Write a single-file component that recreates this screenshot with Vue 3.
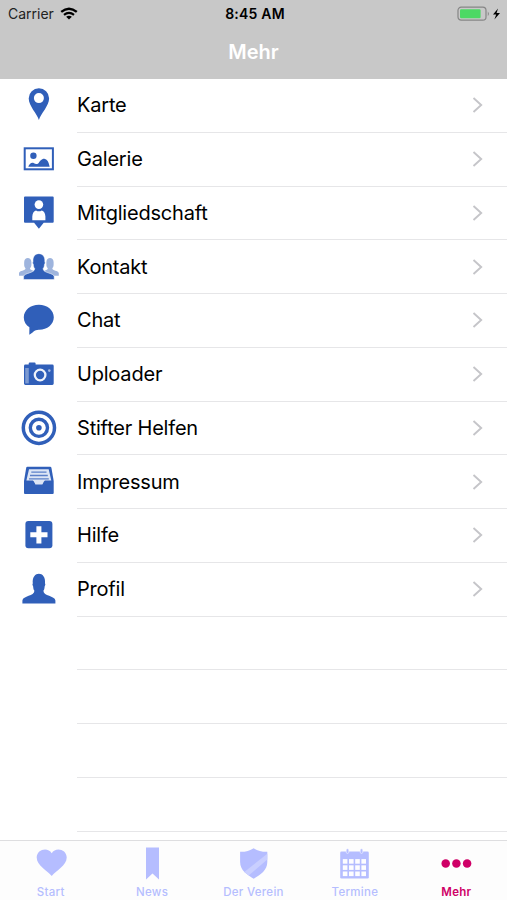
<template>
  <div class="screen">
    <header class="header">
      <div class="status-bar">
        <div class="carrier">
          <span>Carrier</span>
          <svg class="wifi" viewBox="0 0 18 13" fill="none" stroke="#000">
            <path d="M1.2 4.9Q9 -1.5 16.8 4.9" stroke-width="2.4" />
            <path d="M4 7.9Q9 3.9 14 7.9" stroke-width="2.2" />
            <path d="M9 12.4L6.1 9.8Q9 7.8 11.9 9.8Z" fill="#000" stroke="none" />
          </svg>
        </div>
        <span class="time">8:45 AM</span>
        <svg class="battery" viewBox="0 0 45 16">
          <rect x="1" y="1.2" width="28" height="13" rx="3.2" fill="none" stroke="#858585" stroke-width="1.2" />
          <rect x="3" y="3.2" width="20.6" height="9" rx="1.2" fill="#4cd964" />
          <path d="M30.8 5.4Q33 7.7 30.8 10Z" fill="#858585" />
          <path d="M41 2.4L36 8.6H39.2L37.4 13.6L43 6.9H39.6Z" fill="#000" />
        </svg>
      </div>
      <h1 class="title">Mehr</h1>
    </header>

    <main class="list">
      <div v-for="item in items" :key="item.icon" class="row">
        <svg class="icon" viewBox="0 0 77 54" fill="#305fb9">
          <path
            v-if="item.icon === 'pin'"
            fill-rule="evenodd"
            d="M38.9 41C37 34.5 28.7 27 28.7 19.2A10.2 10 0 0 1 49.1 19.2C49.1 27 40.8 34.5 38.9 41ZM38.9 14.1A5 5 0 1 0 38.9 24.1A5 5 0 1 0 38.9 14.1Z"
          />
          <template v-else-if="item.icon === 'picture'">
            <rect x="24.7" y="15.3" width="28.2" height="21" fill="#fff" stroke="#305fb9" stroke-width="2" />
            <circle cx="33.4" cy="22.7" r="3.2" />
            <path d="M28.3 33.7C29 30.8 31.8 28.8 34 30.2Q36 31.7 38.2 30.4C40 28.3 41.4 25.6 44.4 25.7Q48.3 26.2 49.7 33.7Z" />
          </template>
          <template v-else-if="item.icon === 'member'">
            <path d="M25 9.6H52.7Q53.7 9.6 53.7 10.6V34.8Q53.7 35.8 52.7 35.8H43.7L38.9 41.8L34.1 35.8H25Q24 35.8 24 34.8V10.6Q24 9.6 25 9.6Z" />
            <circle cx="38.9" cy="17.6" r="4.3" fill="#fff" />
            <path d="M32.3 33.2V29.4Q32.6 24.5 36 23.4Q38.9 25.2 41.8 23.4Q45.1 24.5 45.4 29.4V33.2Z" fill="#fff" />
          </template>
          <template v-else-if="item.icon === 'group'">
            <g fill="#9eb4dd">
              <path d="M19 35.7V33C19.5 30.6 25.5 31 25.5 28.3C23.8 26.5 24.2 24.7 24.2 22C24.2 16.7 31.4 16.7 31.4 22C31.4 24.7 31.8 26.5 30 28.3C30 31 36.5 30.6 37 33V35.7Z" />
              <path d="M58.8 35.7V33C58.3 30.6 52.3 31 52.3 28.3C54 26.5 53.6 24.7 53.6 22C53.6 16.7 46.4 16.7 46.4 22C46.4 24.7 46 26.5 47.8 28.3C47.8 31 41.3 30.6 40.8 33V35.7Z" />
            </g>
            <path
              stroke="#fff"
              stroke-width="0.5"
              d="M23.6 39.6V36.6C24 32.6 34.8 33.5 34.7 28.6C33.4 27.2 33.6 25.9 33.3 24.3Q32.1 23.2 33 21.5C32 11 45.8 11 44.8 21.5Q45.7 23.2 44.5 24.3C44.2 25.9 44.4 27.2 43.1 28.6C43 33.5 53.8 32.6 54.2 36.6V39.6Z"
            />
          </template>
          <path
            v-else-if="item.icon === 'chat'"
            d="M38.9 10.7C47.2 10.7 53.8 16 53.8 23.3C53.8 30.7 46.8 36 38.6 35.7C34.5 35.7 32.5 38.9 29.3 40.7L29.4 33.3C26 31 23.8 27.8 23.8 23.5C23.8 16 30.6 10.7 38.9 10.7Z"
          />
          <template v-else-if="item.icon === 'camera'">
            <path d="M28.7 16.5V15.6Q28.7 14.6 29.7 14.6H34.6Q35.6 14.6 35.6 15.6V16.5H52.3Q53.7 16.5 53.7 17.9V35.6Q53.7 37 52.3 37H25.4Q24 37 24 35.6V17.9Q24 16.5 25.4 16.5Z" />
            <path d="M25.2 20H28.8V35.4H25.2Z" fill="#7c9ad1" />
            <circle cx="40.1" cy="27" r="5.3" fill="none" stroke="#eef2fa" stroke-width="2.3" />
            <circle cx="49.3" cy="22.6" r="1.3" fill="#a3b8df" />
          </template>
          <template v-else-if="item.icon === 'target'">
            <circle cx="38.9" cy="25.8" r="15.6" fill="none" stroke="#305fb9" stroke-width="3.5" />
            <circle cx="38.9" cy="25.8" r="8.6" fill="none" stroke="#305fb9" stroke-width="3.4" />
            <circle cx="38.9" cy="25.8" r="2.8" />
          </template>
          <template v-else-if="item.icon === 'tray'">
            <path d="M27.4 11.8H50.2Q51.2 11.8 51.4 12.8L53.7 26V38Q53.7 39 52.7 39H25Q24 39 24 38V26L26.2 12.8Q26.4 11.8 27.4 11.8Z" />
            <path d="M29 14.2H48.7L51.3 25.5H44.8L42.7 30H35.1L33 25.5H26.4Z" fill="#dce5f5" />
            <path d="M31.3 17.1H46.5M30 20.5H47.8M29 23.8H48.8" fill="none" stroke="#5b80c9" stroke-width="1.3" />
            <path d="M26 26.2H33.7L35.4 29.5H42.4L44.1 26.2H51.8V30H26Z" />
          </template>
          <template v-else-if="item.icon === 'plus'">
            <rect x="25.4" y="12.1" width="27" height="27.2" rx="3" />
            <path d="M38.9 17.2V34.4M30.3 25.8H47.5" fill="none" stroke="#fff" stroke-width="5" />
          </template>
          <path
            v-else
            d="M22.4 40.6V37.4C23 32.4 34.5 33.4 34.4 27.7C33.2 26.4 33.4 24.8 33.1 23.2Q31.9 22 32.8 20.3C31.3 7.4 46.5 7.4 45 20.3Q45.9 22 44.7 23.2C44.4 24.8 44.6 26.4 43.4 27.7C43.3 33.4 54.8 32.4 55.4 37.4V40.6Z"
          />
        </svg>
        <div class="cell">
          <span class="label">{{ item.label }}</span>
          <svg class="chevron" viewBox="0 0 12 18">
            <path d="M1.5 2L9.2 9L1.5 16" fill="none" stroke="#c5c5c9" stroke-width="1.9" />
          </svg>
        </div>
      </div>
      <div v-for="n in 4" :key="n" class="row empty">
        <div class="cell"></div>
      </div>
    </main>

    <nav class="tabs">
      <div v-for="tab in tabs" :key="tab.icon" class="tab" :class="{ active: tab.active }">
        <svg class="tab-icon" viewBox="0 0 101.4 41" fill="currentColor">
          <path
            v-if="tab.icon === 'heart'"
            d="M51.7 35C47.5 29.8 36.7 24.8 36.7 16.6C36.7 8.4 47.8 5.7 51.7 12.3C55.6 5.7 66.7 8.4 66.7 16.6C66.7 24.8 55.9 29.8 51.7 35Z"
          />
          <path v-else-if="tab.icon === 'bookmark'" d="M45 6.4H58V38.6L51.5 32.6L45 38.6Z" />
          <template v-else-if="tab.icon === 'shield'">
            <path d="M50.7 7.2Q56.5 11 64.3 10.8V21C64.3 29.4 57.3 33.7 50.7 37.7C44.1 33.7 37.1 29.4 37.1 21V10.8Q44.9 11 50.7 7.2Z" />
            <path d="M64.3 12.8V18.4L45.7 34.5L41.3 30.9Z" fill="#c9cfff" />
          </template>
          <template v-else-if="tab.icon === 'calendar'">
            <path d="M37.5 10.6H63.5Q64.8 10.6 64.8 11.9V36.3Q64.8 37.6 63.5 37.6H37.5Q36.2 37.6 36.2 36.3V11.9Q36.2 10.6 37.5 10.6Z" />
            <rect x="42.2" y="7.8" width="2.6" height="4.6" rx="1.2" stroke="#fff" stroke-width="0.5" />
            <rect x="56.2" y="7.8" width="2.6" height="4.6" rx="1.2" stroke="#fff" stroke-width="0.5" />
            <template v-for="r in 3" :key="r">
              <rect v-for="c in 4" :key="c" :x="32.6 + c * 6.2" :y="11.9 + r * 6.2" width="4.6" height="4.6" fill="#fdfdff" />
            </template>
          </template>
          <template v-else>
            <circle v-for="c in 3" :key="c" :cx="29 + c * 10.7" cy="22.4" r="4.25" />
          </template>
        </svg>
        <span class="tab-label">{{ tab.label }}</span>
      </div>
    </nav>
  </div>
</template>

<script setup>
const items = [
  { icon: 'pin', label: 'Karte' },
  { icon: 'picture', label: 'Galerie' },
  { icon: 'member', label: 'Mitgliedschaft' },
  { icon: 'group', label: 'Kontakt' },
  { icon: 'chat', label: 'Chat' },
  { icon: 'camera', label: 'Uploader' },
  { icon: 'target', label: 'Stifter Helfen' },
  { icon: 'tray', label: 'Impressum' },
  { icon: 'plus', label: 'Hilfe' },
  { icon: 'profile', label: 'Profil' }
]

const tabs = [
  { icon: 'heart', label: 'Start' },
  { icon: 'bookmark', label: 'News' },
  { icon: 'shield', label: 'Der Verein' },
  { icon: 'calendar', label: 'Termine' },
  { icon: 'more', label: 'Mehr', active: true }
]
</script>

<style>
body {
  margin: 0;
}
</style>

<style scoped>
.screen {
  display: flex;
  flex-direction: column;
  width: 507px;
  height: 900px;
  overflow: hidden;
  background: #fff;
  color: #000;
  font-family: Inter, "Liberation Sans", sans-serif;
}
.header {
  flex: none;
  height: 79px;
  background: #c8c8c8;
}
.status-bar {
  display: grid;
  grid-template-columns: 1fr auto 1fr;
  align-items: center;
  height: 27px;
  padding: 0 5px 0 8px;
  font-size: 14px;
}
.carrier {
  display: flex;
  align-items: center;
  gap: 6px;
  color: #222;
}
.wifi {
  width: 18px;
  height: 13px;
}
.time {
  font-weight: 600;
  letter-spacing: 0.2px;
}
.battery {
  justify-self: end;
  width: 45px;
  height: 16px;
}
.title {
  margin: 0;
  padding-top: 12px;
  font-size: 20px;
  font-weight: 600;
  line-height: 26px;
  text-align: center;
  color: #fff;
}
.list {
  flex: 1;
  min-height: 0;
  overflow: hidden;
}
.row {
  display: flex;
  height: 53.75px;
}
.icon {
  flex: none;
  width: 77px;
  height: 54px;
}
.cell {
  flex: 1;
  display: flex;
  align-items: center;
  justify-content: space-between;
  box-sizing: border-box;
  padding-right: 23px;
  border-bottom: 1px solid #e6e6e8;
}
.empty {
  padding-left: 77px;
}
.label {
  font-size: 20px;
  letter-spacing: -0.2px;
}
.chevron {
  width: 12px;
  height: 18px;
}
.tabs {
  flex: none;
  display: flex;
  box-sizing: border-box;
  height: 60px;
  border-top: 1px solid #dedee0;
  background: #fdfdfd;
}
.tab {
  flex: 1;
  display: flex;
  flex-direction: column;
  align-items: center;
  color: #b5bdff;
}
.tab.active {
  color: #cf0067;
}
.tab-icon {
  width: 100%;
  height: 41px;
}
.tab-label {
  margin-top: 2px;
  font-size: 11.5px;
  font-weight: 500;
  line-height: 16px;
  letter-spacing: 0.3px;
}
.active .tab-label {
  font-weight: 600;
}
</style>
